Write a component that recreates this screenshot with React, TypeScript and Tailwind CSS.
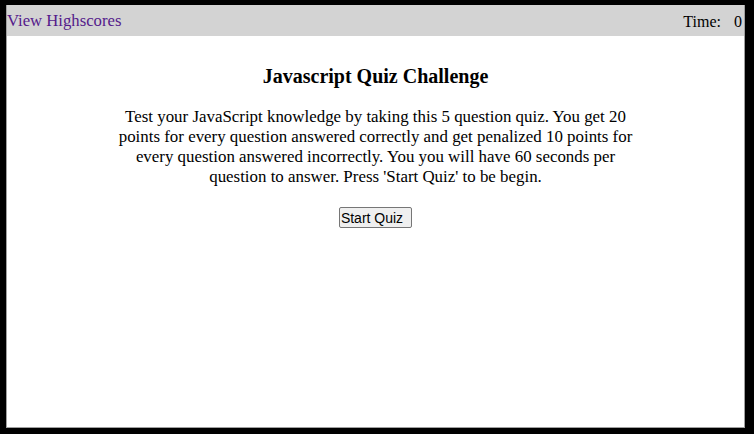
import React from "react";

export default function App() {
  return (
    <div className="w-[754px] h-[434px] bg-black pl-[6px] pt-[5px] pr-[9px] pb-[6px] overflow-hidden">
      <div className="w-full h-full bg-white border-x border-b border-[#a0a0a0] flex flex-col" style={{ fontFamily: '"Liberation Serif", "Times New Roman", serif' }}>
        <div className="h-[31px] pt-[2px] bg-[#d3d3d3] flex items-center justify-between leading-none">
          <a className="text-[#551a8b] text-[16.7px]">View Highscores</a>
          <div className="text-black text-[16px] pr-[2px] flex items-baseline">
            <span>Time:</span>
            <span className="ml-[13px]">0</span>
          </div>
        </div>
        <div className="flex flex-col items-center">
          <h3 className="mt-[28px] text-[20px] font-bold leading-[24px] text-black">Javascript Quiz Challenge</h3>
          <p className="mt-[19px] w-[540px] text-center text-[16.9px] leading-[20px] text-black">
            Test your JavaScript knowledge by taking this 5 question quiz. You get 20 points for every question answered correctly and get penalized 10 points for every question answered incorrectly. You you will have 60 seconds per question to answer. Press 'Start Quiz' to be begin.
          </p>
          <button
            className="mt-[20px] h-[21px] pl-[1px] pr-[8px] bg-[#efefef] border border-[#767676] rounded-[2px] text-[14px] leading-none text-black"
            style={{ fontFamily: '"Liberation Sans", Arial, sans-serif' }}
          >
            Start Quiz
          </button>
        </div>
      </div>
    </div>
  );
}
